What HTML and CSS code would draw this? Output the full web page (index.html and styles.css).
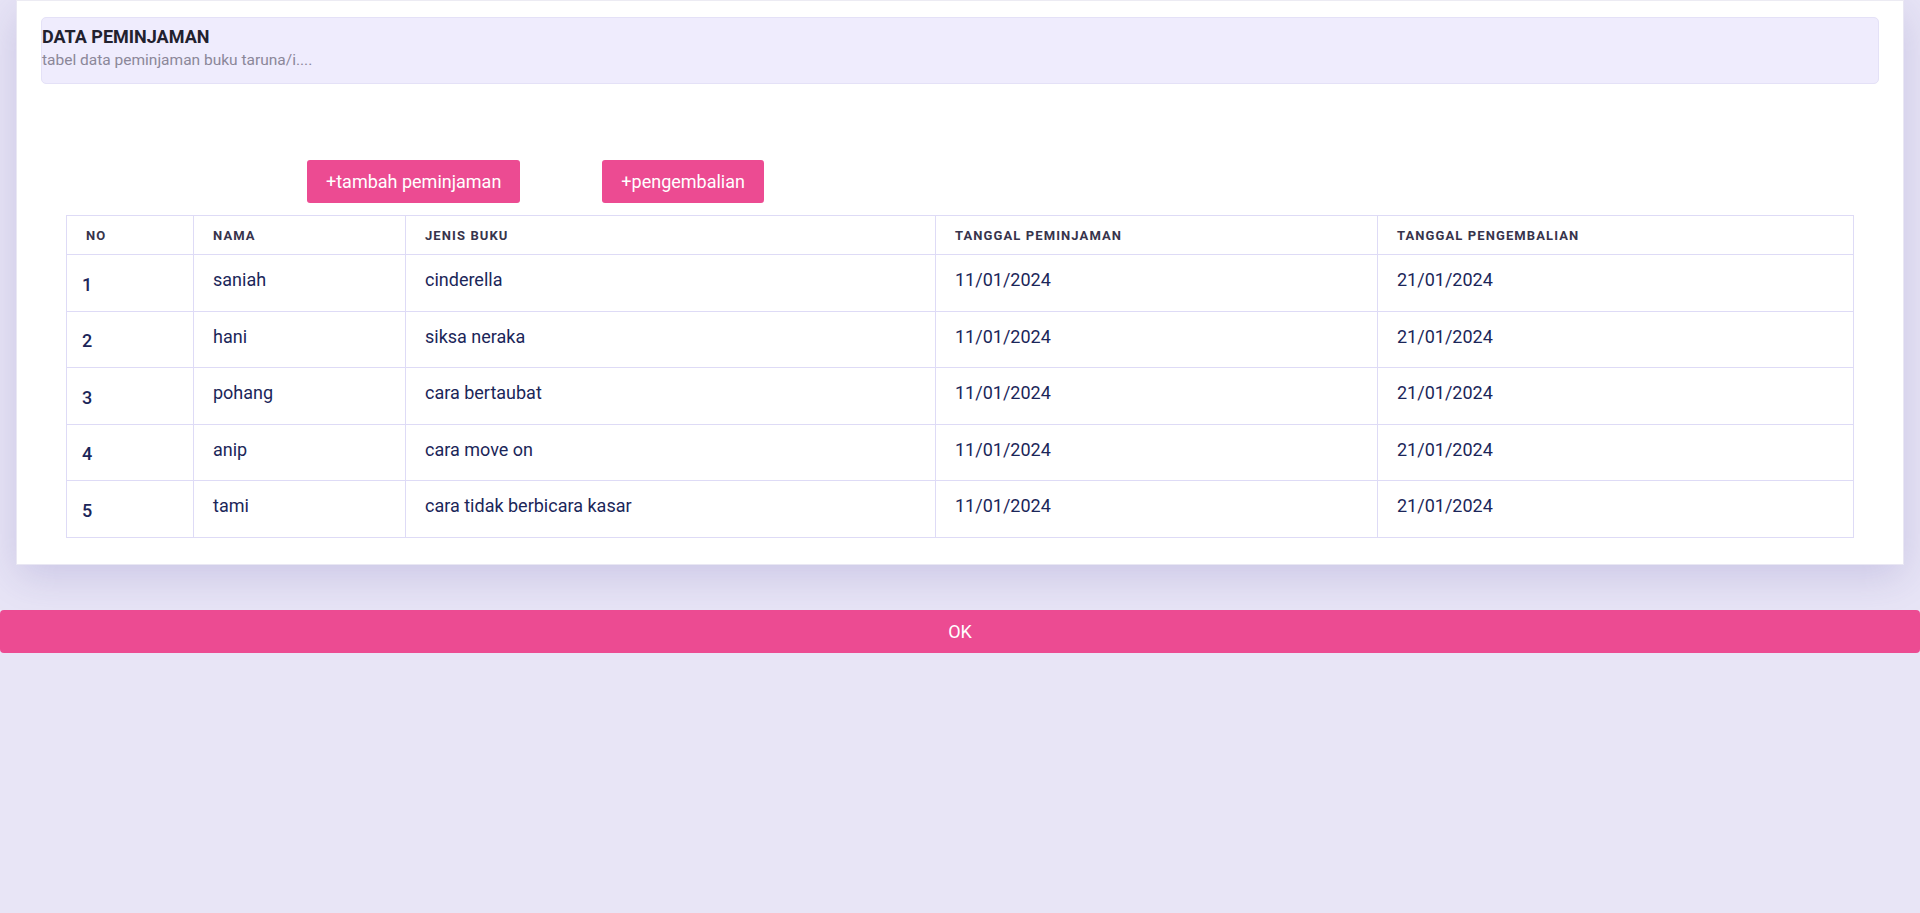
FILE: index.html
```html
<!DOCTYPE html>
<html lang="id">
<head>
<meta charset="utf-8">
<title>Data Peminjaman</title>
<link rel="stylesheet" href="styles.css">
</head>
<body>
<div class="card">
  <div class="header">
    <h1 class="title">DATA PEMINJAMAN</h1>
    <p class="subtitle">tabel data peminjaman buku taruna/i....</p>
  </div>
  <div class="actions">
    <button class="btn">+tambah peminjaman</button>
    <button class="btn">+pengembalian</button>
  </div>
  <table class="data">
    <colgroup>
      <col class="c-no"><col class="c-nama"><col class="c-jenis"><col class="c-pinjam"><col class="c-kembali">
    </colgroup>
    <thead>
      <tr><th>NO</th><th>NAMA</th><th>JENIS BUKU</th><th>TANGGAL PEMINJAMAN</th><th>TANGGAL PENGEMBALIAN</th></tr>
    </thead>
    <tbody>
      <tr><th class="num">1</th><td>saniah</td><td>cinderella</td><td>11/01/2024</td><td>21/01/2024</td></tr>
      <tr><th class="num">2</th><td>hani</td><td>siksa neraka</td><td>11/01/2024</td><td>21/01/2024</td></tr>
      <tr><th class="num">3</th><td>pohang</td><td>cara bertaubat</td><td>11/01/2024</td><td>21/01/2024</td></tr>
      <tr><th class="num">4</th><td>anip</td><td>cara move on</td><td>11/01/2024</td><td>21/01/2024</td></tr>
      <tr><th class="num">5</th><td>tami</td><td>cara tidak berbicara kasar</td><td>11/01/2024</td><td>21/01/2024</td></tr>
    </tbody>
  </table>
</div>
<button class="ok">OK</button>
</body>
</html>
```

FILE: styles.css
```css
html, body {
  margin: 0;
  padding: 0;
}
body {
  background: #e8e5f6;
  font-family: Roboto, "Liberation Sans", sans-serif;
  min-height: 913px;
}
.card {
  margin: 0 16px;
  background: #ffffff;
  border: 1px solid #e9e7f3;
  border-top: 1px solid #ecebf3;
  padding: 16px 24px 26px 24px;
  box-shadow: 0 12px 40px rgba(95, 85, 170, 0.22);
}
.header {
  background: #efecfd;
  border: 1px solid #e4e1f7;
  border-radius: 5px;
  height: 65px;
  box-sizing: content-box;
}
.title {
  margin: 0;
  padding-top: 8px;
  font-size: 18px;
  line-height: 22px;
  font-weight: 700;
  color: #22212e;
}
.subtitle {
  margin: 0;
  padding-top: 3px;
  font-size: 15.5px;
  line-height: 18px;
  color: #8b8799;
}
.actions {
  display: flex;
  gap: 82px;
  padding-left: 266px;
  margin-top: 76px;
}
.btn {
  background: #ec4b92;
  color: #ffffff;
  border: none;
  border-radius: 3px;
  font-family: Roboto, "Liberation Sans", sans-serif;
  font-size: 18px;
  height: 43px;
  padding: 0 19px;
  cursor: pointer;
}
.data {
  margin: 12px 0 0 25px;
  width: 1787px;
  border-collapse: collapse;
  table-layout: fixed;
  border: 1px solid #dedbf6;
}
.c-no { width: 127px; }
.c-nama { width: 212px; }
.c-jenis { width: 530px; }
.c-pinjam { width: 442px; }
.c-kembali { width: 476px; }
.data th, .data td {
  border: 1px solid #dedbf6;
  text-align: left;
}
.data thead th {
  height: 38px;
  padding: 0 19px;
  font-size: 13px;
  font-weight: 700;
  letter-spacing: 1.1px;
  color: #37344c;
  vertical-align: middle;
}
.data tbody td {
  height: 56.5px;
  padding: 14px 19px 0 19px;
  box-sizing: border-box;
  vertical-align: top;
  font-size: 18px;
  line-height: 21px;
  color: #1b2659;
}
.data tbody th.num {
  padding: 0 15px;
  vertical-align: middle;
  font-size: 18px;
  font-weight: 500;
  color: #1b2659;
  padding-top: 3px;
}
.ok {
  display: block;
  width: 100%;
  margin-top: 45px;
  height: 43px;
  background: #ec4b92;
  color: #ffffff;
  border: none;
  border-radius: 4px;
  font-family: Roboto, "Liberation Sans", sans-serif;
  font-size: 18px;
  cursor: pointer;
}
```
